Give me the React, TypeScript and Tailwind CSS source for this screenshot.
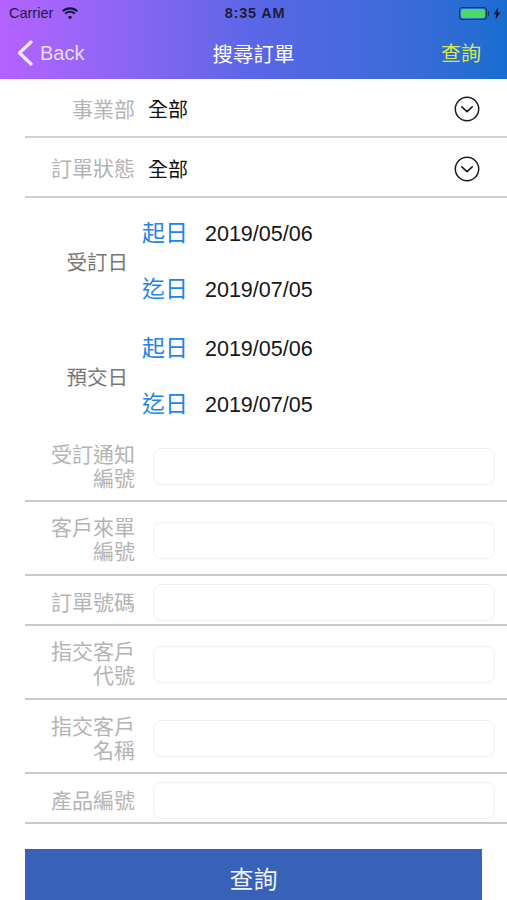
const CJK = "font-['Noto_Sans_CJK_TC','Noto_Sans_CJK_SC',sans-serif]";

function ChevronCircle() {
  return (
    <svg className="h-[26px] w-[26px]" viewBox="0 0 26 26" fill="none" stroke="#1c1c1c">
      <circle cx="13" cy="13" r="11.7" strokeWidth="1.5" />
      <path d="M7.8 10.8 13 15.6l5.2-4.8" strokeWidth="1.6" strokeLinecap="round" strokeLinejoin="round" />
    </svg>
  );
}

function SelectRow({ label, height }: { label: string; height: string }) {
  return (
    <div className={`ml-[25px] flex items-center border-b-2 border-[#cfcfcf] pt-[3px] ${height}`}>
      <div className="w-[110px] pb-[2px] text-right text-[21px] leading-none text-[#b4b4b4]">{label}</div>
      <div className="ml-[13px] flex-1 text-[20px] leading-none text-[#111]">全部</div>
      <div className="mr-[27px]">
        <ChevronCircle />
      </div>
    </div>
  );
}

function DateGroup({ label, from, to }: { label: string; from: string; to: string }) {
  return (
    <div className="flex h-[112px] items-center">
      <div className="w-[128px] text-right text-[20.5px] leading-none text-[#777]">{label}</div>
      <div className="ml-[14px] flex flex-col">
        {[
          ["起日", from],
          ["迄日", to],
        ].map(([name, value]) => (
          <div key={name} className="flex h-[56px] items-center">
            <span className="w-[63px] pb-[4px] text-[23px] leading-none text-[#2384e6]">{name}</span>
            <span className="pt-[4px] font-['Liberation_Sans',sans-serif] text-[21.5px] leading-none text-[#161616]">
              {value}
            </span>
          </div>
        ))}
      </div>
    </div>
  );
}

function InputRow({ lines, className }: { lines: string[]; className: string }) {
  return (
    <div className={`ml-[25px] flex items-center border-b-2 border-[#c8c8c8] ${className}`}>
      <div className="w-[110px] pb-[4px] text-right text-[21px] leading-[24px] text-[#b4b4b4]">
        {lines[0]}
        {lines[1] && <br />}
        {lines[1]}
      </div>
      <div className="ml-[18px] h-[37px] w-[342px] rounded-lg border border-[#f0f0f0] bg-white" />
    </div>
  );
}

export default function App() {
  return (
    <div className={`h-[900px] w-[507px] overflow-hidden bg-white ${CJK}`}>
      <header className="h-[79px] bg-gradient-to-r from-[#b562ff] via-[#5a66e6] to-[#166dd0]">
        <div className="flex h-[27px] items-center justify-between pl-[9px] pr-[6px] font-['Liberation_Sans',sans-serif] text-[14.5px] text-[#1d1d3a]">
          <div className="flex w-[110px] items-center gap-[8px]">
            <span>Carrier</span>
            <svg className="h-[13px] w-[18px]" viewBox="0 0 17 12" fill="#15153a">
              <path d="M8.5 2.2c2.4 0 4.5.9 6.2 2.4l1.3-1.4A11 11 0 0 0 8.5.2 11 11 0 0 0 1 3.2l1.3 1.4a9.2 9.2 0 0 1 6.2-2.4Z" />
              <path d="M8.5 5.4c1.5 0 2.9.6 3.9 1.5l1.3-1.4a7.6 7.6 0 0 0-10.4 0l1.3 1.4c1-.9 2.4-1.5 3.9-1.5Z" />
              <path d="M8.5 8.4c-.8 0-1.5.3-2 .8l2 2.5 2-2.5c-.5-.5-1.2-.8-2-.8Z" />
            </svg>
          </div>
          <span className="font-bold tracking-[0.8px]">8:35 AM</span>
          <div className="flex w-[110px] items-center justify-end">
            <div className="flex h-[13px] w-[28px] items-center rounded-[3px] border border-[#15306a] p-[1px]">
              <div className="h-full w-full rounded-[2px] bg-[#4cd964]" />
            </div>
            <div className="ml-[1px] h-[5px] w-[1px] bg-[#15306a]" />
            <svg className="ml-[4px] h-[13px] w-[8px]" viewBox="0 0 8 12" fill="#15153a">
              <path d="M5 0 .6 6.8h2.6L2.6 12 7.4 4.9H4.6L5 0Z" />
            </svg>
          </div>
        </div>
        <div className="flex h-[52px] items-center justify-between pl-[17px] pr-[26px]">
          <div className="flex w-[120px] items-center gap-[7px]">
            <svg className="h-[26px] w-[16px]" viewBox="0 0 16 26" fill="none" stroke="#f0e8ff" strokeWidth="3.2" strokeLinecap="round" strokeLinejoin="round">
              <path d="M14 2 2.5 13 14 24" />
            </svg>
            <span className="font-['Liberation_Sans',sans-serif] text-[20px] leading-none text-[#e8dcff]">Back</span>
          </div>
          <div className="text-[20.5px] leading-none text-white">搜尋訂單</div>
          <div className="flex w-[111px] justify-end text-[20px] leading-none text-[#d6ea4c]">查詢</div>
        </div>
      </header>

      <SelectRow label="事業部" height="h-[59px]" />
      <SelectRow label="訂單狀態" height="h-[60px]" />

      <section className="flex h-[238px] flex-col gap-[3px] pt-[7px]">
        <DateGroup label="受訂日" from="2019/05/06" to="2019/07/05" />
        <DateGroup label="預交日" from="2019/05/06" to="2019/07/05" />
      </section>

      <InputRow lines={["受訂通知", "編號"]} className="h-[66px] pb-[3px]" />
      <InputRow lines={["客戶來單", "編號"]} className="h-[74px] pt-[4px]" />
      <InputRow lines={["訂單號碼"]} className="h-[50px] pt-[5px]" />
      <InputRow lines={["指交客戶", "代號"]} className="h-[74px] pt-[4px]" />
      <InputRow lines={["指交客戶", "名稱"]} className="h-[74px] pt-[5px]" />
      <InputRow lines={["產品編號"]} className="h-[50px] pt-[5px]" />

      <button className="ml-[25px] mt-[25px] flex h-[58px] w-[457px] items-center justify-center bg-[#3762b8] text-[24px] leading-none text-[#eef2fb]">
        查詢
      </button>
    </div>
  );
}
